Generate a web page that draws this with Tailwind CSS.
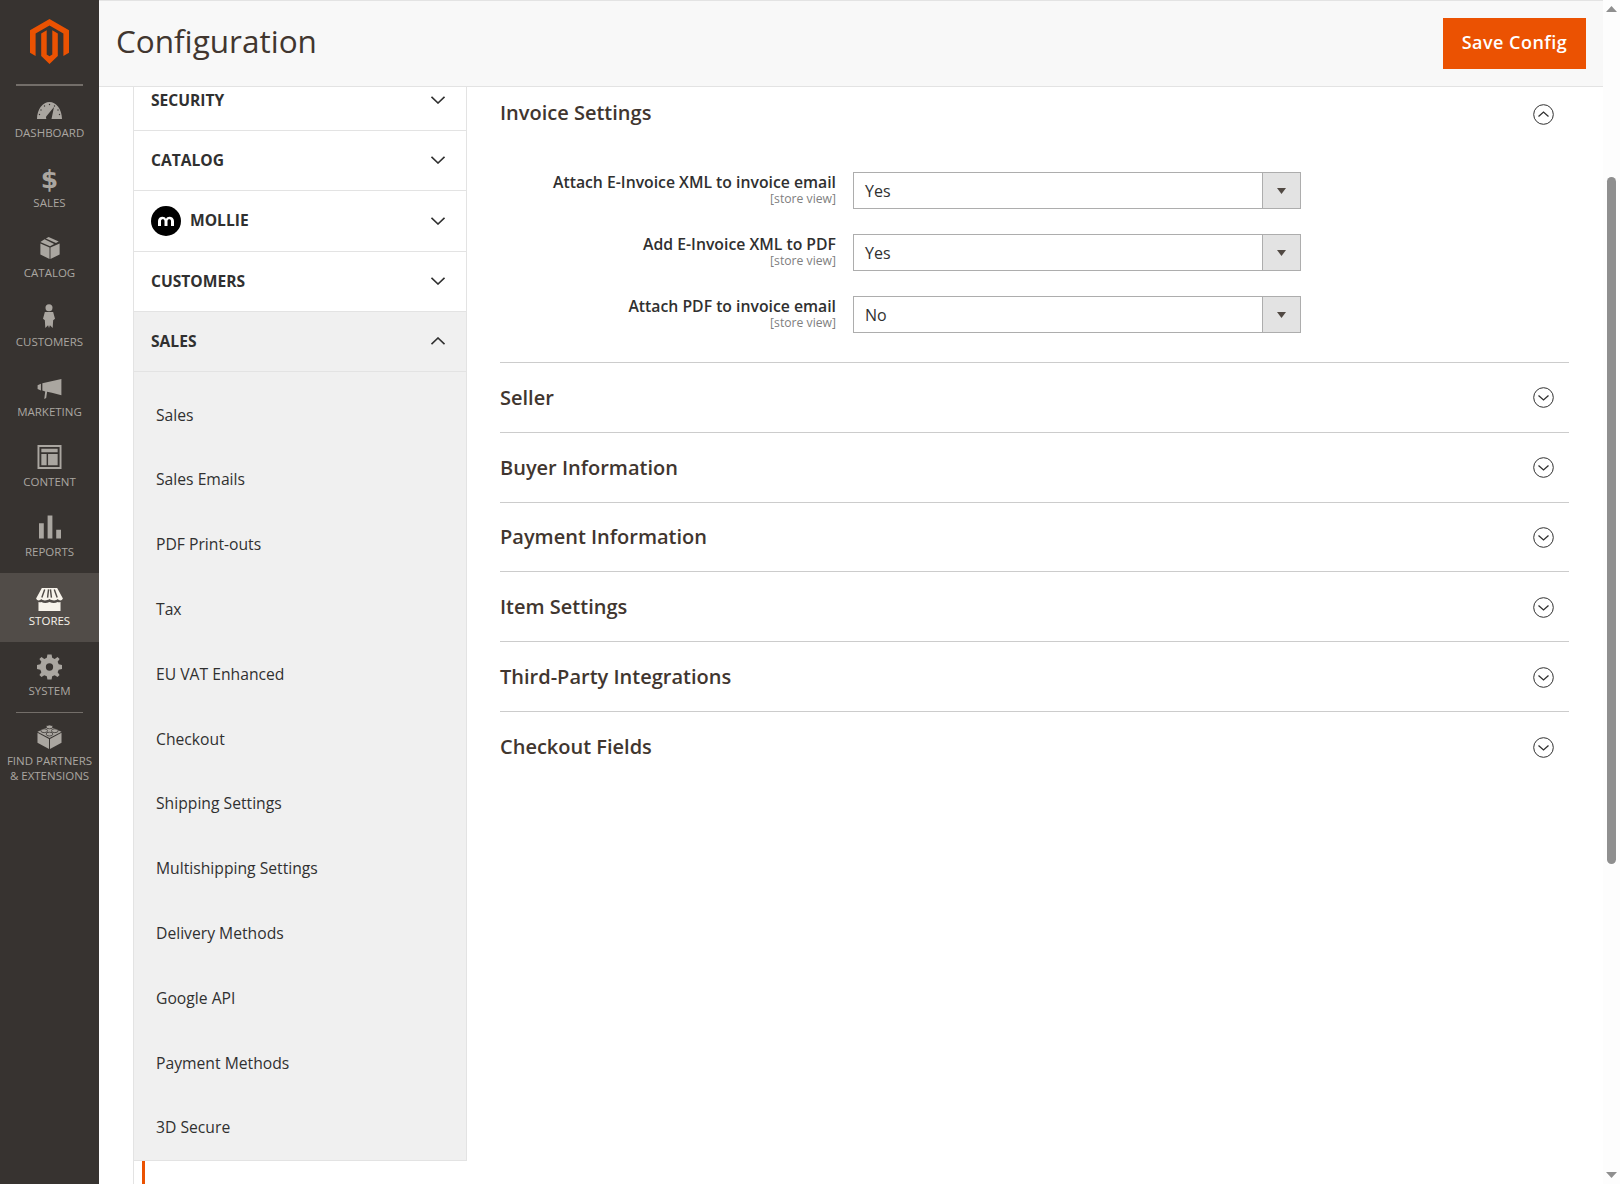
<!DOCTYPE html>
<html lang="en">

<head>
  <meta charset="UTF-8">
  <title>Configuration</title>
  <script src="https://cdn.jsdelivr.net/npm/@tailwindcss/browser@4"></script>
</head>

<body class="bg-white font-['Open_Sans',sans-serif] text-[#303030] overflow-hidden">
  <div class="flex h-[1184px] w-[1620px]">

    <!-- left nav -->
    <nav class="w-[99px] shrink-0 bg-[#373330] flex flex-col items-center text-[11.5px] leading-[15px] text-[#aaa6a0] uppercase">
      <div class="h-[84px] w-full flex flex-col items-center pt-[19px]">
        <svg class="w-[39px] h-[45px]" viewBox="0 0 39 45" fill="#eb5202">
          <path d="M19.5 0 39 11.3V33.7L33.4 37V14.5L19.5 6.5 5.6 14.5V37L0 33.7V11.3Z" />
          <path d="M16.7 11.3V35.6L19.5 37.3 22.3 35.6V11.3L27.8 14.5V37L19.5 45 11.2 37V14.5Z" />
        </svg>
      </div>
      <div class="w-[67px] h-[2px] bg-[#736e69]"></div>
      <a class="h-[70px] pt-[12px] flex flex-col items-center">
        <span class="h-[27px] flex items-end">
          <svg class="w-[25px] h-[17px] mb-[6px]" viewBox="0 0 25 17" fill="#aaa6a0">
            <path d="M0 17C0 7 6 0 12.500 0S25 7 25 17H14.500L17 5 10 13.500C9 14.500 8.500 16 9.500 17Z" />
            <g fill="#373330">
              <circle cx="12.500" cy="2.500" r=".7" />
              <circle cx="7.500" cy="4" r=".7" />
              <circle cx="4" cy="8" r=".7" />
              <circle cx="2.500" cy="12.500" r=".7" />
              <circle cx="17.500" cy="4" r=".7" />
              <circle cx="21" cy="8" r=".7" />
              <circle cx="22.500" cy="12.500" r=".7" />
            </g>
          </svg>
        </span>
        <span>Dashboard</span>
      </a>
      <a class="h-[70px] pt-[12px] flex flex-col items-center">
        <span class="h-[27px] flex items-end">
          <span class="mb-[2px] text-[25px] leading-[27px] font-bold font-['DejaVu_Sans']">$</span>
        </span>
        <span>Sales</span>
      </a>
      <a class="h-[69px] pt-[12px] flex flex-col items-center">
        <span class="h-[27px] flex items-end">
          <svg class="w-[20px] h-[22px] mb-[6px]" viewBox="0 0 21 24" fill="#aaa6a0">
            <path d="M0 7 10 11.500V24L0 19ZM21 7 11 11.500V24L21 19ZM9 0 20 5 17 6.500 6 1.500ZM4.500 2.500 15 7.500 10.500 10 0 5.500Z" />
          </svg>
        </span>
        <span>Catalog</span>
      </a>
      <a class="h-[70px] pt-[12px] flex flex-col items-center">
        <span class="h-[27px] flex items-end">
          <svg class="w-[12px] h-[27px] mb-[4px]" viewBox="0 0 13 27" fill="#aaa6a0">
            <circle cx="6.500" cy="4" r="3.800" />
            <path d="M2 8.500H11L13 16 11 17.500 10.500 26 7.500 23 6.500 26 5.500 23 2.500 26 2 17.500 0 16Z" />
          </svg>
        </span>
        <span>Customers</span>
      </a>
      <a class="h-[70px] pt-[12px] flex flex-col items-center">
        <span class="h-[27px] flex items-end">
          <svg class="w-[25px] h-[20px] mb-[5px]" viewBox="0 0 25 21" fill="#aaa6a0">
            <path d="M0 6.500 3.500 5V12L0 10.500ZM5 4.500 25 0V17L15 14.500 10 13.500 9 20 7 21 8 13 5 12Z" />
          </svg>
        </span>
        <span>Marketing</span>
      </a>
      <a class="h-[70px] pt-[12px] flex flex-col items-center">
        <span class="h-[27px] flex items-end">
          <svg class="w-[25px] h-[24px] mb-[5px]" viewBox="0 0 25 25" fill="#aaa6a0">
            <path fill-rule="evenodd" d="M0 0H25V25H0ZM2 2V23H23V2ZM4 4H21V7.500H4ZM4 9.500H9.500V21H4ZM11 9.500H21V21H11Z" />
          </svg>
        </span>
        <span>Content</span>
      </a>
      <a class="h-[68px] pt-[12px] flex flex-col items-center">
        <span class="h-[27px] flex items-end">
          <svg class="w-[22px] h-[24px] mb-[5px]" viewBox="0 0 23 24" fill="#aaa6a0">
            <path d="M0 8H5V24H0ZM9 0H14V24H9ZM18 15H23V24H18Z" />
          </svg>
        </span>
        <span>Reports</span>
      </a>
      <a class="w-full h-[69px] pt-[13px] bg-[#514c48] text-[#f7f3eb] flex flex-col items-center">
        <span class="h-[27px] flex items-end">
          <svg class="w-[27px] h-[23px] mb-[2px]" viewBox="0 0 28 24" fill="#f7f3eb">
            <path d="M6 0H22L28 11C27 13.500 24 13.500 22.500 11.500 21 13.500 17 13.500 14 11.500 11 13.500 7 13.500 5.500 11.500 4 13.500 1 13.500 0 11Z" />
            <path d="M2.500 14.500C4 15 5 14.800 5.500 14.500 8 16 11 16 14 14.500 17 16 20 16 22.500 14.500 23 14.800 24 15 25.500 14.500V24H2.500Z" />
            <path d="M9 1.500 6 10M13 1.500 12 10M15 1.500 16 10M19 1.500 22 10" stroke="#514c48" stroke-width="1.500" fill="none" />
          </svg>
        </span>
        <span>Stores</span>
      </a>
      <a class="h-[70px] pt-[14px] flex flex-col items-center">
        <span class="h-[27px] flex items-end">
          <svg class="w-[25px] h-[26px] mb-[3px]" viewBox="0 0 24 24" fill="#aaa6a0">
            <path fill-rule="evenodd" d="M10 0H14L14.600 3.200 17 4.200 19.700 2.300 21.700 4.300 19.800 7 20.800 9.400 24 10V14L20.800 14.600 19.800 17 21.700 19.700 19.700 21.700 17 19.800 14.600 20.800 14 24H10L9.400 20.800 7 19.800 4.300 21.700 2.300 19.700 4.200 17 3.200 14.600 0 14V10L3.200 9.400 4.200 7 2.300 4.300 4.300 2.300 7 4.200 9.400 3.200ZM12 8.500A3.500 3.500 0 1 0 12 15.500 3.500 3.500 0 0 0 12 8.500Z" />
          </svg>
        </span>
        <span>System</span>
      </a>
      <div class="w-[67px] h-px bg-[#736e69]"></div>
      <a class="pt-[13px] flex flex-col items-center text-center">
        <span class="h-[27px] flex items-end">
          <svg class="w-[25px] h-[25px] mb-[4px]" viewBox="0 0 25 26" fill="#aaa6a0">
            <path d="M0 9 12 15.500V26L0 19.500ZM25 9 13 15.500V26L25 19.500Z" />
            <path d="M12.500 2.500 25 8 12.500 14.500 0 8Z" />
            <g stroke="#373330" stroke-width=".8">
              <ellipse cx="12.500" cy="3" rx="3.500" ry="2" />
              <ellipse cx="7" cy="7" rx="3.500" ry="2" />
              <ellipse cx="18" cy="7" rx="3.500" ry="2" />
              <ellipse cx="12.500" cy="10.500" rx="3.500" ry="2" />
            </g>
          </svg>
        </span>
        <span>Find Partners<br>&amp; Extensions</span>
      </a>
    </nav>

    <!-- main -->
    <div class="w-[1504px] shrink-0 flex flex-col">
      <header class="h-[87px] shrink-0 bg-[#f8f8f8] border-y border-[#e3e3e3] flex items-center justify-between pl-[17px] pr-[17px]">
        <h1 class="mb-[6px] text-[31.5px] leading-[44px] text-[#41362f]">Configuration</h1>
        <button class="w-[143px] h-[51px] mb-[1px] pb-[2px] bg-[#eb5202] text-white text-[18px] font-semibold tracking-[.48px]">Save Config</button>
      </header>

      <div class="flex flex-1 overflow-hidden">
        <!-- config tabs -->
        <aside class="ml-[34px] w-[334px] shrink-0 border-l border-[#e3e3e3]">
          <div class="border-r border-[#e3e3e3]">
            <div class="h-[44px] pl-[17px] pr-[21px] pb-[16px] flex items-center justify-between border-b border-[#e3e3e3]">
              <span class="text-[15.6px] font-bold">SECURITY</span>
              <svg class="w-[14px] h-[8px] mb-[2px]" viewBox="0 0 14 8" fill="none" stroke="#303030" stroke-width="1.600"><path d="M.5.800 7 7 13.500.800" /></svg>
            </div>
            <div class="h-[60px] pl-[17px] pr-[21px] flex items-center justify-between border-b border-[#e3e3e3]">
              <span class="text-[15.6px] font-bold">CATALOG</span>
              <svg class="w-[14px] h-[8px] mb-[2px]" viewBox="0 0 14 8" fill="none" stroke="#303030" stroke-width="1.600"><path d="M.5.800 7 7 13.500.800" /></svg>
            </div>
            <div class="h-[61px] pl-[17px] pr-[21px] flex items-center justify-between border-b border-[#e3e3e3]">
              <span class="flex items-center gap-[9px] text-[15.6px] font-bold">
                <svg class="w-[30px] h-[30px]" viewBox="0 0 30 30">
                  <circle cx="15" cy="15" r="15" fill="#000" />
                  <path d="M7 20V15C7 10 14 9.500 15 13 16 9.500 23 10 23 15V20H20V15C20 12.500 16.500 12.500 16.500 15V20H13.500V15C13.500 12.500 10 12.500 10 15V20Z" fill="#fff" />
                </svg>
                MOLLIE
              </span>
              <svg class="w-[14px] h-[8px] mb-[1px]" viewBox="0 0 14 8" fill="none" stroke="#303030" stroke-width="1.600"><path d="M.5.800 7 7 13.500.800" /></svg>
            </div>
            <div class="h-[60px] pl-[17px] pr-[21px] flex items-center justify-between border-b border-[#e3e3e3]">
              <span class="text-[15.6px] font-bold">CUSTOMERS</span>
              <svg class="w-[14px] h-[8px] mb-[2px]" viewBox="0 0 14 8" fill="none" stroke="#303030" stroke-width="1.600"><path d="M.5.800 7 7 13.500.800" /></svg>
            </div>
            <div class="h-[60px] pl-[17px] pr-[21px] flex items-center justify-between border-b border-[#e3e3e3] bg-[#f0f0f0]">
              <span class="text-[15.6px] font-bold">SALES</span>
              <svg class="w-[14px] h-[8px] mb-[2px]" viewBox="0 0 14 8" fill="none" stroke="#303030" stroke-width="1.600"><path d="M.5 7.200 7 1 13.500 7.200" /></svg>
            </div>
            <ul class="bg-[#f0f0f0] border-b border-[#e3e3e3] h-[789px] pt-[11px] pl-[22px] text-[15.7px]">
              <li class="h-[64.8px] flex items-center">Sales</li>
              <li class="h-[64.8px] flex items-center">Sales Emails</li>
              <li class="h-[64.8px] flex items-center">PDF Print-outs</li>
              <li class="h-[64.8px] flex items-center">Tax</li>
              <li class="h-[64.8px] flex items-center">EU VAT Enhanced</li>
              <li class="h-[64.8px] flex items-center">Checkout</li>
              <li class="h-[64.8px] flex items-center">Shipping Settings</li>
              <li class="h-[64.8px] flex items-center">Multishipping Settings</li>
              <li class="h-[64.8px] flex items-center">Delivery Methods</li>
              <li class="h-[64.8px] flex items-center">Google API</li>
              <li class="h-[64.8px] flex items-center">Payment Methods</li>
              <li class="h-[64.8px] flex items-center">3D Secure</li>
            </ul>
          </div>
          <div class="h-[24px] pl-[8px]">
            <div class="w-[3px] h-full bg-[#eb5202]"></div>
          </div>
        </aside>

        <!-- config form -->
        <main class="ml-[33px] w-[1069px] shrink-0">
          <section class="h-[276px] border-b border-[#ccc]">
            <div class="h-[54px] flex items-center justify-between pr-[15px]">
              <h2 class="mb-[2px] text-[20px] font-semibold text-[#41362f]">Invoice Settings</h2>
              <svg class="w-[21px] h-[21px]" viewBox="0 0 21 21" fill="none" stroke="#303030"><circle cx="10.500" cy="10.500" r="9.800" stroke-width="1" /><path d="M5.500 12.500 10.500 8 15.500 12.500" stroke-width="1.300" /></svg>
            </div>
            <div class="pt-[31px] flex flex-col gap-[25px]">
              <div class="flex h-[37px]">
                <div class="w-[336px] text-right">
                  <div class="text-[15.77px] leading-[20px] font-semibold">Attach E-Invoice XML to invoice email</div>
                  <div class="mt-[1px] text-[12.2px] leading-[12px] text-[#808080]">[store view]</div>
                </div>
                <div class="ml-[17px] w-[448px] h-[37px] border border-[#adadad] flex">
                  <span class="flex-1 pl-[11px] text-[16px] leading-[36px]">Yes</span>
                  <span class="w-[38px] bg-[#e3e3e3] border-l border-[#adadad] flex items-center justify-center">
                    <svg class="w-[9px] h-[6px]" viewBox="0 0 9 6" fill="#514943"><path d="M0 0H9L4.500 6Z" /></svg>
                  </span>
                </div>
              </div>
              <div class="flex h-[37px]">
                <div class="w-[336px] text-right">
                  <div class="text-[15.77px] leading-[20px] font-semibold">Add E-Invoice XML to PDF</div>
                  <div class="mt-[1px] text-[12.2px] leading-[12px] text-[#808080]">[store view]</div>
                </div>
                <div class="ml-[17px] w-[448px] h-[37px] border border-[#adadad] flex">
                  <span class="flex-1 pl-[11px] text-[16px] leading-[36px]">Yes</span>
                  <span class="w-[38px] bg-[#e3e3e3] border-l border-[#adadad] flex items-center justify-center">
                    <svg class="w-[9px] h-[6px]" viewBox="0 0 9 6" fill="#514943"><path d="M0 0H9L4.500 6Z" /></svg>
                  </span>
                </div>
              </div>
              <div class="flex h-[37px]">
                <div class="w-[336px] text-right">
                  <div class="text-[15.77px] leading-[20px] font-semibold">Attach PDF to invoice email</div>
                  <div class="mt-[1px] text-[12.2px] leading-[12px] text-[#808080]">[store view]</div>
                </div>
                <div class="ml-[17px] w-[448px] h-[37px] border border-[#adadad] flex">
                  <span class="flex-1 pl-[11px] text-[16px] leading-[36px]">No</span>
                  <span class="w-[38px] bg-[#e3e3e3] border-l border-[#adadad] flex items-center justify-center">
                    <svg class="w-[9px] h-[6px]" viewBox="0 0 9 6" fill="#514943"><path d="M0 0H9L4.500 6Z" /></svg>
                  </span>
                </div>
              </div>
            </div>
          </section>
          <section class="h-[69.8px] border-b border-[#ccc] flex items-center justify-between pr-[15px]">
            <h2 class="mt-[1px] text-[20px] font-semibold text-[#41362f]">Seller</h2>
            <svg class="w-[21px] h-[21px] mt-[1px]" viewBox="0 0 21 21" fill="none" stroke="#303030"><circle cx="10.500" cy="10.500" r="9.800" stroke-width="1" /><path d="M5.500 8.500 10.500 13 15.500 8.500" stroke-width="1.300" /></svg>
          </section>
          <section class="h-[69.8px] border-b border-[#ccc] flex items-center justify-between pr-[15px]">
            <h2 class="mt-[1px] text-[20px] font-semibold text-[#41362f]">Buyer Information</h2>
            <svg class="w-[21px] h-[21px] mt-[1px]" viewBox="0 0 21 21" fill="none" stroke="#303030"><circle cx="10.500" cy="10.500" r="9.800" stroke-width="1" /><path d="M5.500 8.500 10.500 13 15.500 8.500" stroke-width="1.300" /></svg>
          </section>
          <section class="h-[69.8px] border-b border-[#ccc] flex items-center justify-between pr-[15px]">
            <h2 class="mt-[1px] text-[20px] font-semibold text-[#41362f]">Payment Information</h2>
            <svg class="w-[21px] h-[21px] mt-[1px]" viewBox="0 0 21 21" fill="none" stroke="#303030"><circle cx="10.500" cy="10.500" r="9.800" stroke-width="1" /><path d="M5.500 8.500 10.500 13 15.500 8.500" stroke-width="1.300" /></svg>
          </section>
          <section class="h-[69.8px] border-b border-[#ccc] flex items-center justify-between pr-[15px]">
            <h2 class="mt-[1px] text-[20px] font-semibold text-[#41362f]">Item Settings</h2>
            <svg class="w-[21px] h-[21px] mt-[1px]" viewBox="0 0 21 21" fill="none" stroke="#303030"><circle cx="10.500" cy="10.500" r="9.800" stroke-width="1" /><path d="M5.500 8.500 10.500 13 15.500 8.500" stroke-width="1.300" /></svg>
          </section>
          <section class="h-[69.8px] border-b border-[#ccc] flex items-center justify-between pr-[15px]">
            <h2 class="mt-[1px] text-[20px] font-semibold text-[#41362f]">Third-Party Integrations</h2>
            <svg class="w-[21px] h-[21px] mt-[1px]" viewBox="0 0 21 21" fill="none" stroke="#303030"><circle cx="10.500" cy="10.500" r="9.800" stroke-width="1" /><path d="M5.500 8.500 10.500 13 15.500 8.500" stroke-width="1.300" /></svg>
          </section>
          <section class="h-[69.8px] flex items-center justify-between pr-[15px]">
            <h2 class="mt-[1px] text-[20px] font-semibold text-[#41362f]">Checkout Fields</h2>
            <svg class="w-[21px] h-[21px] mt-[1px]" viewBox="0 0 21 21" fill="none" stroke="#303030"><circle cx="10.500" cy="10.500" r="9.800" stroke-width="1" /><path d="M5.500 8.500 10.500 13 15.500 8.500" stroke-width="1.300" /></svg>
          </section>
        </main>
      </div>
    </div>

    <!-- page scrollbar -->
    <div class="w-[17px] shrink-0 bg-[#fdfdfd] flex flex-col items-center">
      <svg class="w-[11px] h-[6px] mt-[6px]" viewBox="0 0 11 6" fill="#8f8f8f"><path d="M5.500 0 11 6H0Z" /></svg>
      <div class="mt-[165px] w-[9px] h-[687px] rounded-full bg-[#8f8f8f]"></div>
      <svg class="w-[11px] h-[6px] mt-auto mb-[6px]" viewBox="0 0 11 6" fill="#8f8f8f"><path d="M0 0H11L5.500 6Z" /></svg>
    </div>
  </div>
</body>

</html>
